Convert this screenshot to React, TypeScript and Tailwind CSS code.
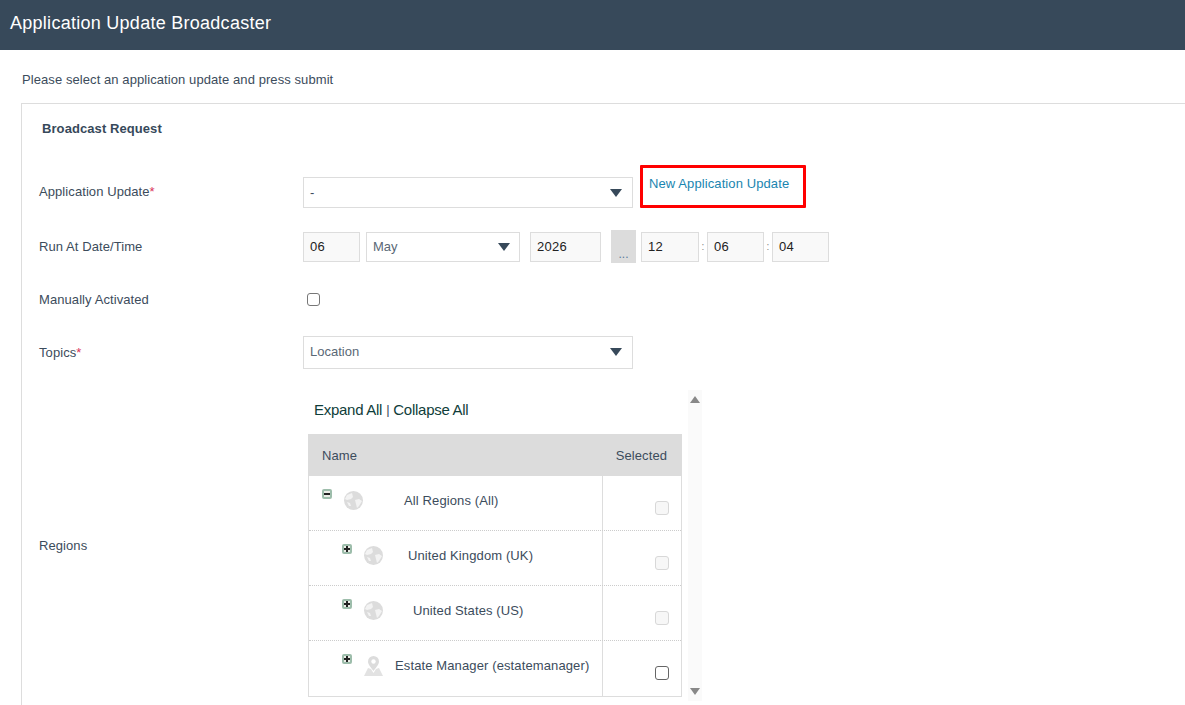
import * as React from "react";

const Caret = () => (
  <svg width="12" height="8" viewBox="0 0 12 8" className="shrink-0">
    <path d="M0 0h12L6 8z" fill="#37495a" />
  </svg>
);

const Field = ({ className, children }: { className: string; children: React.ReactNode }) => (
  <div className={`flex h-[30px] shrink-0 items-center border border-[#dddddd] bg-[#f9f9f9] pl-[6px] text-[13px] tracking-[0.25px] text-[#222222] ${className}`}>
    {children}
  </div>
);

const Label = ({ children, star }: { children: string; star?: boolean }) => (
  <div className="w-[281px] shrink-0 pl-[17px] text-[13px] tracking-[0.08px] text-[#3c4c5c]">
    {children}
    {star && <span className="text-[#d9345a]">*</span>}
  </div>
);

const Globe = () => (
  <svg width="19" height="19" viewBox="0 0 19 19">
    <circle cx="9.500" cy="9.500" r="9.500" fill="#dcdcdc" />
    <path d="M8 2l1 4-2 2-4 1-2-1 2-4zM11 9l4-1 3 2-3 5-2 2-1-4zM3 11l3 1 1 3-2 0z" fill="#f3f3f3" />
  </svg>
);

const Pin = () => (
  <svg width="19" height="20" viewBox="0 0 19 20">
    <path d="M9.500 0a5.500 5.500 0 0 1 5.500 5.500c0 3-3 6-5.500 9.500C7 11.500 4 8.500 4 5.500A5.500 5.500 0 0 1 9.500 0z" fill="#dcdcdc" />
    <circle cx="9.500" cy="5.500" r="2.200" fill="#ffffff" />
    <path d="M4 12l3 1 2.500 4 2.500-4 3-1 4 8H0z" fill="#e2e2e2" />
  </svg>
);

const Toggle = ({ open }: { open?: boolean }) => (
  <div className="relative h-[10px] w-[10px] rounded-[2px] border-2 border-[#9dbdab] bg-[#eceee8]">
    <div className="absolute left-0 top-[2px] h-[2px] w-[6px] bg-[#222222]" />
    {!open && <div className="absolute left-[2px] top-0 h-[6px] w-[2px] bg-[#222222]" />}
  </div>
);

const TreeRow = ({
  name, indent, gap, icon, open, enabled, last,
}: {
  name: string; indent: string; gap: string; icon: React.ReactNode; open?: boolean; enabled?: boolean; last?: boolean;
}) => (
  <div className={`flex h-[55px] ${last ? "" : "border-b border-dotted border-[#cccccc]"}`}>
    <div className={`flex w-[294px] border-r border-[#dddddd] pt-[13px] ${indent}`}>
      <div className="mr-[12px] shrink-0"><Toggle open={open} /></div>
      <div className="mt-[2px] shrink-0">{icon}</div>
      <div className={`mt-[2px] whitespace-nowrap text-[13px] tracking-[0.12px] text-[#3c4c5c] ${gap}`}>{name}</div>
    </div>
    <div className="flex flex-1 justify-end pr-[12px] pt-[25px]">
      <div className={`h-[14px] w-[14px] rounded-[3px] border ${enabled ? "border-[#666666] bg-white" : "border-[#d8d8d8] bg-[#f7f7f7]"}`} />
    </div>
  </div>
);

export default function App() {
  return (
    <div className="h-[705px] overflow-hidden bg-white font-['Liberation_Sans',Arial,sans-serif]">
      <header className="flex h-[50px] items-center bg-[#37495a] pb-[4px] pl-[10px] text-[18px] tracking-[0.27px] text-white">
        Application Update Broadcaster
      </header>
      <div className="pl-[21px] pt-[23px]">
        <p className="h-[30px] pl-[1px] text-[13px] leading-[14px] tracking-[0.08px] text-[#3c4c5c]">Please select an application update and press submit</p>
        <div className="h-[620px] border-l border-t border-[#dddddd]">
          <div className="pl-[20px] pt-[18px] text-[13px] font-bold leading-[14px] tracking-[0.08px] text-[#37495a]">Broadcast Request</div>

          <div className="mt-[29px] flex h-[44px] items-start">
            <div className="mt-[17px]"><Label star>Application Update</Label></div>
            <div className="mt-[12px] flex h-[31px] w-[330px] items-center justify-between border border-[#dddddd] pl-[6px] pr-[10px] text-[13px] text-[#3c4c5c]">
              - <Caret />
            </div>
            <div className="ml-[7px] h-[43px] w-[166px] rounded-[1px] border-[3px] border-[#ff0000] pl-[6px] pt-[9px] text-[13px] leading-[14px] tracking-[0.1px] text-[#1a85b0]">
              New Application Update
            </div>
          </div>

          <div className="mt-[22px] flex h-[31px] items-center">
            <Label>Run At Date/Time</Label>
            <Field className="w-[57px]">06</Field>
            <div className="ml-[6px] flex h-[30px] w-[154px] items-center justify-between border border-[#dddddd] pl-[6px] pr-[9px] text-[13px] text-[#5a6876]">
              May <Caret />
            </div>
            <Field className="ml-[10px] w-[71px]">2026</Field>
            <div className="ml-[10px] flex h-[33px] w-[25px] items-end justify-center bg-[#dcdcdc] pb-[2px] text-[12px] leading-[14px] text-[#5a7a9a]">...</div>
            <Field className="ml-[5px] w-[58px]">12</Field>
            <span className="w-[8px] text-center text-[10px] text-[#888888]">:</span>
            <Field className="w-[57px]">06</Field>
            <span className="w-[8px] text-center text-[10px] text-[#888888]">:</span>
            <Field className="w-[57px]">04</Field>
          </div>

          <div className="mt-[24px] flex h-[26px] items-center">
            <div className="pt-[1px]"><Label>Manually Activated</Label></div>
            <div className="ml-[4px] h-[13px] w-[13px] rounded-[3px] border border-[#777777] bg-white" />
          </div>

          <div className="mt-[24px] flex h-[33px] items-center">
            <Label star>Topics</Label>
            <div className="flex h-[33px] w-[330px] items-center justify-between border border-[#dddddd] pb-[1px] pl-[6px] pr-[10px] text-[13px] text-[#5a6876]">
              Location <Caret />
            </div>
          </div>

          <div className="mt-[21px] flex h-[311px] items-center">
            <Label>Regions</Label>
            <div className="ml-[5px] w-[374px] shrink-0 self-start">
              <div className="flex h-[44px] items-center pb-[4px] pl-[6px] text-[15px] tracking-[-0.27px] text-[#0f3d3a]">
                Expand All<span className="mx-[4px] text-[13px] text-[#3c4c5c]">|</span>Collapse All
              </div>
              <div className="border-x border-b border-[#dddddd]">
                <div className="-mx-px flex h-[42px] items-center justify-between bg-[#dcdcdc] pl-[14px] pr-[15px] pt-[1px] text-[13px] tracking-[0.08px] text-[#3c4c5c]">
                  <span>Name</span>
                  <span>Selected</span>
                </div>
                <TreeRow name="All Regions (All)" indent="pl-[13px]" gap="ml-[41px]" icon={<Globe />} open />
                <TreeRow name="United Kingdom (UK)" indent="pl-[33px]" gap="ml-[25px]" icon={<Globe />} />
                <TreeRow name="United States (US)" indent="pl-[33px]" gap="ml-[30px]" icon={<Globe />} />
                <TreeRow name="Estate Manager (estatemanager)" indent="pl-[33px]" gap="ml-[12px]" icon={<Pin />} enabled last />
              </div>
            </div>
            <div className="ml-[6px] flex h-[311px] w-[14px] flex-col items-center justify-between self-start bg-[#fafafa] py-[6px]">
              <div className="h-0 w-0 border-x-[5px] border-b-[7px] border-x-transparent border-b-[#888888]" />
              <div className="h-0 w-0 border-x-[5px] border-t-[7px] border-x-transparent border-t-[#888888]" />
            </div>
          </div>
        </div>
      </div>
    </div>
  );
}
